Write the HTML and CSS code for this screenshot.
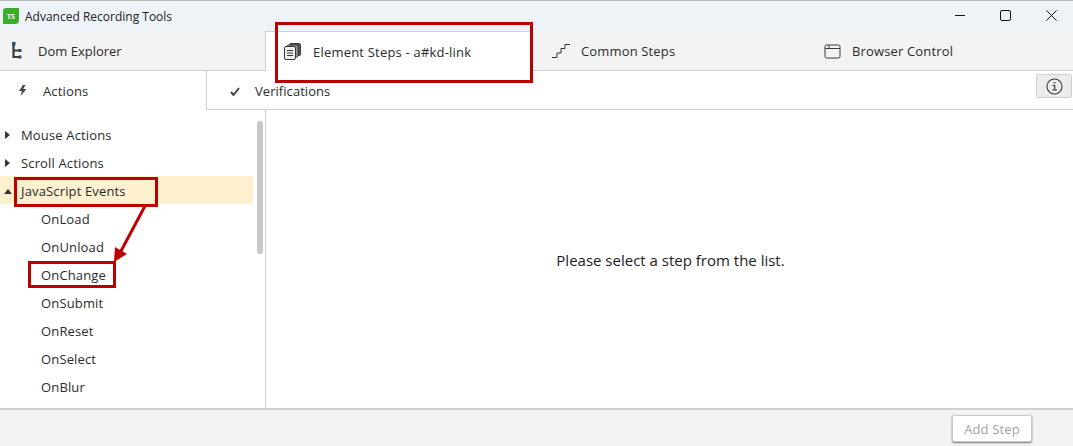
FILE: index.html
```html
<!DOCTYPE html>
<html lang="en">
<head>
<meta charset="utf-8">
<title>Advanced Recording Tools</title>
<link rel="stylesheet" href="styles.css">
</head>
<body>
<div class="app">
  <header class="titlebar">
    <svg class="logo" width="16" height="16" viewBox="0 0 16 16"><path d="M3 0h13v12a4 4 0 0 1-4 4H0V3a3 3 0 0 1 3-3z" fill="#3cae2c"/><text x="8" y="10.5" class="logo-text" text-anchor="middle">TS</text></svg>
    <span class="title">Advanced Recording Tools</span>
    <div class="winctl">
      <svg width="12" height="12" viewBox="0 0 12 12"><path d="M1 5.500h10" stroke="#111" fill="none"/></svg>
      <svg width="12" height="12" viewBox="0 0 12 12"><rect x="0.500" y="0.500" width="10" height="10" rx="1.500" stroke="#111" fill="none"/></svg>
      <svg width="12" height="12" viewBox="0 0 12 12"><path d="M.5 .5l10 10M10.500 .5l-10 10" stroke="#111" fill="none"/></svg>
    </div>
  </header>
  <nav class="tabs">
    <div class="tab tab-dom">
      <svg class="tab-icon" width="14" height="18" viewBox="0 0 14 18"><path d="M3.500 2v13H9M3.500 8.500H9" stroke="#3a3a3a" stroke-width="2.200" fill="none"/><rect x="2" y="0" width="3.500" height="3.500" fill="#2b4a73"/><rect x="8.500" y="7" width="3" height="3" fill="#2b4a73"/><rect x="8.500" y="13.500" width="3" height="3" fill="#2b4a73"/></svg>
      <span>Dom Explorer</span>
    </div>
    <div class="tab tab-active">
      <svg class="tab-icon" width="17" height="17" viewBox="0 0 17 17"><g stroke="#3a3a3a"><rect x="5.500" y="0.500" width="11" height="12" rx="1.500" fill="#555"/><rect x="3" y="2" width="11" height="12" rx="1.500" fill="#999"/><rect x="0.500" y="3.500" width="11" height="13" rx="1.500" fill="#eee"/></g><path d="M3 7.500h6M3 10h6M3 12.500h6" stroke="#333"/></svg>
      <span>Element Steps - a#kd-link</span>
    </div>
    <div class="tab">
      <svg class="tab-icon" width="18" height="14" viewBox="0 0 18 14"><path d="M0 13.500h5v-4.500h4v-4.500h4V.5h5" stroke="#333" fill="none"/></svg>
      <span>Common Steps</span>
    </div>
    <div class="tab">
      <svg class="tab-icon" width="17" height="15" viewBox="0 0 17 15"><rect x="1" y="1" width="15" height="13" rx="1.500" stroke="#3a3a3a" fill="none"/><path d="M1 4.500h15M5 1v3.500" stroke="#3a3a3a" fill="none"/></svg>
      <span>Browser Control</span>
    </div>
  </nav>
  <div class="subtabs">
    <div class="subtab subtab-active">
      <svg class="sub-icon" width="9" height="11" viewBox="0 0 9 11"><path d="M5 0L1 6h3L2.500 11 8.500 4H5.200L7.500 0z" fill="#444"/></svg>
      <span>Actions</span>
    </div>
    <div class="subtab subtab-plain">
      <svg class="sub-icon" width="10" height="9" viewBox="0 0 10 9"><path d="M1 5l2.500 3L9 1" stroke="#444" stroke-width="2" fill="none"/></svg>
      <span>Verifications</span>
    </div>
    <button class="info-btn" type="button" aria-label="Info">
      <svg width="17" height="17" viewBox="0 0 17 17"><circle cx="8.500" cy="8.500" r="7.500" stroke="#3a3a3a" stroke-width="1.100" fill="none"/><path d="M6.500 7.500h2.200v4.500M6.200 12h5M7.500 4.800h2" stroke="#3a3a3a" stroke-width="1.200" fill="none"/></svg>
    </button>
  </div>
  <main class="main">
    <aside class="tree">
      <ul class="tree-list">
        <li class="row"><i class="caret"></i>Mouse Actions</li>
        <li class="row"><i class="caret"></i>Scroll Actions</li>
        <li class="row row-open"><i class="caret caret-up"></i>JavaScript Events</li>
        <li class="row row-child">OnLoad</li>
        <li class="row row-child">OnUnload</li>
        <li class="row row-child">OnChange</li>
        <li class="row row-child">OnSubmit</li>
        <li class="row row-child">OnReset</li>
        <li class="row row-child">OnSelect</li>
        <li class="row row-child">OnBlur</li>
      </ul>
      <div class="scrollbar"></div>
    </aside>
    <section class="detail">Please select a step from the list.</section>
  </main>
  <footer class="footer">
    <button class="add-btn" type="button">Add Step</button>
  </footer>
  <div class="mark mark-tab"></div>
  <div class="mark mark-js"></div>
  <div class="mark mark-change"></div>
  <svg class="arrow" width="60" height="70" viewBox="0 0 60 70"><path d="M32 0L8 45" stroke="#bb0000" stroke-width="3" fill="none"/><path d="M1 56L2 41 14 48z" fill="#bb0000"/></svg>
</div>
</body>
</html>
```
FILE: styles.css
```css
* { box-sizing: border-box; }
html, body { margin: 0; padding: 0; }
body { background: #fff; }
.app {
  position: relative;
  width: 1073px;
  height: 446px;
  overflow: hidden;
  display: flex;
  flex-direction: column;
  font-family: "Open Sans", "Noto Sans", sans-serif;
  font-size: 13px;
  letter-spacing: 0.15px;
  color: #2b2b2b;
}
.titlebar {
  height: 31px;
  flex: none;
  display: flex;
  align-items: center;
  padding-left: 3px;
  background: #eef3f9;
  border-top: 1px solid #b8b8b8;
  letter-spacing: 0;
}
.logo { flex: none; margin-right: 6px; }
.logo-text { font-size: 7px; font-weight: 700; fill: #fff; font-family: "Open Sans", sans-serif; }
.title { font-size: 12px; color: #222; }
.winctl {
  margin-left: auto;
  display: flex;
  gap: 34px;
  padding-right: 15px;
}
.tabs {
  height: 40px;
  flex: none;
  display: grid;
  grid-template-columns: 265px 268px 272px 268px;
  background: #f3f3f3;
}
.tab {
  display: flex;
  align-items: center;
  padding-left: 19px;
  padding-top: 1px;
  border-bottom: 1px solid #cfcfcf;
}
.tab-dom { padding-left: 10px; letter-spacing: 0; }
.tab-dom .tab-icon { margin-right: 14px; }
.tab-icon { flex: none; margin-right: 11px; }
.tab-active {
  background: #fff;
  border: 1px solid #cfcfcf;
  border-bottom: 0;
  padding-left: 18px;
  padding-top: 0;
  letter-spacing: 0.2px;
}
.tab-active .tab-icon { margin-right: 12px; }
.subtabs {
  height: 39px;
  flex: none;
  display: flex;
  align-items: center;
  position: relative;
}
.subtab {
  height: 100%;
  display: flex;
  align-items: center;
}
.subtab-active {
  width: 207px;
  padding-left: 18px;
  border-right: 1px solid #cfcfcf;
}
.subtab-active .sub-icon { margin-right: 16px; }
.subtab-plain {
  flex: 1;
  padding-left: 23px;
  padding-top: 2px;
  border-bottom: 1px solid #cfcfcf;
  letter-spacing: 0.05px;
}
.subtab-plain .sub-icon { margin-right: 15px; }
.info-btn {
  position: absolute;
  right: 1px;
  top: 3px;
  width: 36px;
  height: 24px;
  padding: 0;
  display: flex;
  align-items: center;
  justify-content: center;
  background: #ececec;
  border: 1px solid #d0d0d0;
  border-radius: 2px;
}
.main {
  flex: 1;
  min-height: 0;
  display: flex;
}
.tree {
  width: 266px;
  flex: none;
  position: relative;
  border-right: 1px solid #cfcfcf;
  padding-top: 10px;
  overflow: hidden;
}
.tree-list { list-style: none; margin: 0; padding: 0; width: 253px; }
.row {
  height: 28px;
  display: flex;
  align-items: center;
  padding: 2px 0 0 5px;
}
.row-open { background: #fdf0cf; }
.row-child { padding-left: 41px; }
.caret {
  width: 0;
  height: 0;
  margin-right: 11px;
  border-left: 5px solid #333;
  border-top: 4px solid transparent;
  border-bottom: 4px solid transparent;
}
.caret-up {
  margin-left: -1px;
  margin-right: 9px;
  border-left: 4px solid transparent;
  border-right: 4px solid transparent;
  border-bottom: 5px solid #333;
  border-top: 0;
}
.scrollbar {
  position: absolute;
  left: 257px;
  top: 11px;
  width: 6px;
  height: 133px;
  border-radius: 3px;
  background: #c8c8c8;
}
.detail {
  flex: 1;
  display: flex;
  align-items: center;
  justify-content: center;
  font-size: 15px;
  letter-spacing: 0;
  color: #1c1c1c;
  padding: 2px 0 0 2px;
}
.footer {
  height: 38px;
  flex: none;
  display: flex;
  justify-content: flex-end;
  align-items: flex-start;
  padding: 5px 41px 0 0;
  background: #f3f3f3;
  border-top: 2px solid #cfcfcf;
}
.add-btn {
  width: 80px;
  height: 27px;
  padding: 0;
  font: inherit;
  letter-spacing: inherit;
  color: #a3a3a3;
  background: #fff;
  border: 1px solid #c9c9c9;
  border-radius: 2px;
  box-shadow: 0 1px 2px #777;
}
.mark { position: absolute; border: 3px solid #bb0000; }
.mark-tab { left: 275px; top: 22px; width: 258px; height: 61px; }
.mark-js { left: 14px; top: 177px; width: 144px; height: 30px; }
.mark-change { left: 28px; top: 261px; width: 88px; height: 27px; }
.arrow { position: absolute; left: 113px; top: 206px; }
```
